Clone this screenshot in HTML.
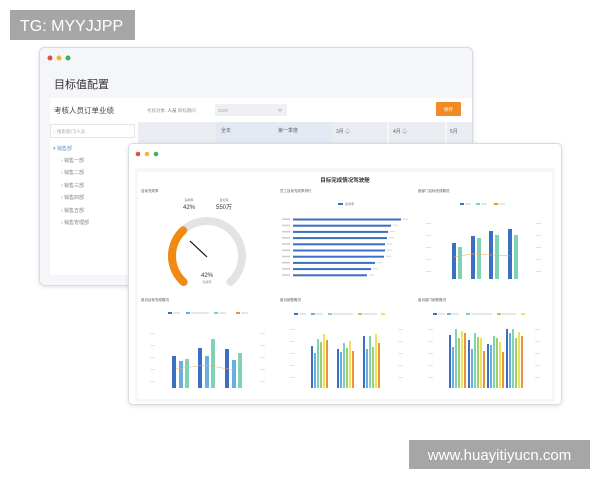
<!DOCTYPE html>
<html><head><meta charset="utf-8"><style>
html,body{margin:0;padding:0;background:#fff;width:600px;height:480px;overflow:hidden}
svg{display:block}
text{font-family:"Liberation Sans","Noto Sans CJK SC",sans-serif}
</style></head><body>
<svg width="600" height="480" viewBox="0 0 600 480" xmlns="http://www.w3.org/2000/svg">
<defs><filter id="sh" x="-10%" y="-10%" width="120%" height="120%"><feDropShadow dx="0" dy="1" stdDeviation="2" flood-color="#000" flood-opacity="0.12"/></filter></defs>
<rect x="10" y="10" width="125" height="30" fill="#a6a6a6"/>
<text x="20" y="31" font-size="16" fill="#fff">TG: MYYJJPP</text>
<!-- back window -->
<rect x="39.5" y="47.5" width="433" height="238" rx="5" fill="#f4f6f9" stroke="#d8dbe0" filter="url(#sh)"/>
<circle cx="50" cy="58" r="2.5" fill="#e0504a"/><circle cx="59" cy="58" r="2.5" fill="#f2b630"/><circle cx="68" cy="58" r="2.5" fill="#3cb55a"/>
<text x="54" y="88" font-size="11" fill="#333">目标值配置</text>
<rect x="50" y="98" width="422" height="24" fill="#fff"/>
<text x="54" y="113" font-size="7.5" fill="#444">考核人员订单业绩</text>
<text x="147" y="112" font-size="4.5" fill="#999">考核对象: <tspan fill="#555">人员</tspan>  目标期间</text>
<rect x="215" y="104" width="72" height="12" fill="#eef0f3"/>
<text x="218" y="112" font-size="4.5" fill="#aaa">2020</text>
<path d="M278 109l2 2 2-2" stroke="#999" fill="none" stroke-width=".7"/>
<rect x="436" y="102" width="25" height="14" rx="1" fill="#f08a24"/>
<text x="444" y="111" font-size="4.5" fill="#fff">保存</text>
<rect x="50" y="122" width="88" height="153" fill="#fff"/>
<rect x="50.5" y="124.5" width="84" height="13" fill="#fff" stroke="#e3e5e8"/>
<text x="53" y="133" font-size="4.5" fill="#aaa">○ 搜索部门/人员</text>
<text x="53" y="150" font-size="5" fill="#6a8fd8">▾  销售部</text>
<g font-size="5" fill="#888">
<text x="61" y="162">›  销售一部</text><text x="61" y="174">›  销售二部</text><text x="61" y="187">›  销售三部</text>
<text x="61" y="199">›  销售四部</text><text x="61" y="212">›  销售五部</text><text x="61" y="224">›  销售管理部</text></g>
<rect x="138" y="122" width="334" height="22" fill="#e9ecf1"/>
<rect x="216" y="122" width="116" height="22" fill="#e3e8f2"/>
<g font-size="5" fill="#666"><text x="221" y="132">全年</text><text x="278" y="132">第一季度</text><text x="336" y="133">3月 ♤</text><text x="393" y="133">4月 ♤</text><text x="450" y="133">5月</text></g>
<line x1="388" y1="122" x2="388" y2="144" stroke="#fff"/><line x1="446" y1="122" x2="446" y2="144" stroke="#fff"/>
<!-- front window -->
<rect x="128.5" y="143.5" width="433" height="261" rx="4" fill="#fff" stroke="#d8dbe0" filter="url(#sh)"/>
<circle cx="138" cy="154" r="2.3" fill="#e0504a"/><circle cx="147" cy="154" r="2.3" fill="#f2b630"/><circle cx="156" cy="154" r="2.3" fill="#3cb55a"/>
<rect x="135" y="168" width="420" height="234" fill="#f5f7fa"/>
<rect x="138" y="172" width="414" height="227" fill="#fff"/>
<text x="345" y="182" font-size="5.5" fill="#333" text-anchor="middle" font-weight="bold">目标完成情况驾驶舱</text>
<g font-size="3.5" fill="#555"><text x="141" y="192">目标完成率</text><text x="280" y="192">员工目标完成率排行</text><text x="418" y="192">各部门目标完成概况</text>
<text x="141" y="301">各月目标完成概况</text><text x="280" y="301">各月销售概况</text><text x="418" y="301">各月部门销售概况</text></g>
<!-- gauge -->
<path d="M183.6 282 A35 35 0 1 1 230.4 282" stroke="#e3e3e5" stroke-width="8" fill="none" stroke-linecap="round"/>
<path d="M183.6 282 A35 35 0 0 1 183.1 230.4" stroke="#f08a12" stroke-width="8" fill="none" stroke-linecap="round"/>
<line x1="190" y1="241" x2="207" y2="257" stroke="#111" stroke-width="1.2"/>
<g text-anchor="middle" fill="#333"><text x="189" y="201" font-size="3" fill="#777">完成率</text><text x="189" y="209" font-size="6">42%</text>
<text x="224" y="201" font-size="3" fill="#777">目标值</text><text x="224" y="209" font-size="6">550万</text>
<text x="207" y="277" font-size="6">42%</text><text x="207" y="283" font-size="3" fill="#888">完成率</text></g>
<!-- hbars -->
<rect x="338" y="203" width="5" height="2" fill="#3a6fc4"/><text x="345" y="205" font-size="3" fill="#777">完成率</text>
<g fill="#3a6fc4">
<rect x="293" y="218.5" width="108" height="2"/><rect x="293" y="224.7" width="98" height="2"/><rect x="293" y="230.9" width="95" height="2"/>
<rect x="293" y="237.1" width="94" height="2"/><rect x="293" y="243.3" width="92" height="2"/><rect x="293" y="249.5" width="92" height="2"/>
<rect x="293" y="255.7" width="91" height="2"/><rect x="293" y="261.9" width="82" height="2"/><rect x="293" y="268.1" width="78" height="2"/><rect x="293" y="274.3" width="74" height="2"/></g>
<g fill="#ccc"><rect x="282" y="218.5" width="8" height="1.5"/><rect x="282" y="224.7" width="8" height="1.5"/><rect x="282" y="230.9" width="8" height="1.5"/><rect x="282" y="237.1" width="8" height="1.5"/><rect x="282" y="243.3" width="8" height="1.5"/><rect x="282" y="249.5" width="8" height="1.5"/><rect x="282" y="255.7" width="8" height="1.5"/><rect x="282" y="261.9" width="8" height="1.5"/><rect x="282" y="268.1" width="8" height="1.5"/><rect x="282" y="274.3" width="8" height="1.5"/></g>
<g fill="#ddd"><rect x="403" y="218.5" width="5" height="1.2"/><rect x="393" y="224.7" width="5" height="1.2"/><rect x="390" y="230.9" width="5" height="1.2"/><rect x="389" y="237.1" width="5" height="1.2"/><rect x="387" y="243.3" width="5" height="1.2"/><rect x="387" y="249.5" width="5" height="1.2"/><rect x="386" y="255.7" width="5" height="1.2"/><rect x="377" y="261.9" width="5" height="1.2"/><rect x="373" y="268.1" width="5" height="1.2"/><rect x="369" y="274.3" width="5" height="1.2"/></g>
<!-- axis ticks (faint) -->
<g fill="#e2e2e2">
<rect x="426" y="223" width="5" height="1"/><rect x="426" y="235" width="5" height="1"/><rect x="426" y="247" width="5" height="1"/><rect x="426" y="259" width="5" height="1"/><rect x="426" y="271" width="5" height="1"/>
<rect x="536" y="223" width="5" height="1"/><rect x="536" y="235" width="5" height="1"/><rect x="536" y="247" width="5" height="1"/><rect x="536" y="259" width="5" height="1"/><rect x="536" y="271" width="5" height="1"/>
<rect x="150" y="333" width="5" height="1"/><rect x="150" y="345" width="5" height="1"/><rect x="150" y="357" width="5" height="1"/><rect x="150" y="369" width="5" height="1"/><rect x="150" y="381" width="5" height="1"/>
<rect x="260" y="333" width="5" height="1"/><rect x="260" y="345" width="5" height="1"/><rect x="260" y="357" width="5" height="1"/><rect x="260" y="369" width="5" height="1"/><rect x="260" y="381" width="5" height="1"/>
<rect x="290" y="329" width="5" height="1"/><rect x="290" y="341" width="5" height="1"/><rect x="290" y="353" width="5" height="1"/><rect x="290" y="365" width="5" height="1"/><rect x="290" y="377" width="5" height="1"/>
<rect x="398" y="329" width="5" height="1"/><rect x="398" y="341" width="5" height="1"/><rect x="398" y="353" width="5" height="1"/><rect x="398" y="365" width="5" height="1"/><rect x="398" y="377" width="5" height="1"/>
<rect x="428" y="329" width="5" height="1"/><rect x="428" y="341" width="5" height="1"/><rect x="428" y="353" width="5" height="1"/><rect x="428" y="365" width="5" height="1"/><rect x="428" y="377" width="5" height="1"/>
<rect x="535" y="329" width="5" height="1"/><rect x="535" y="341" width="5" height="1"/><rect x="535" y="353" width="5" height="1"/><rect x="535" y="365" width="5" height="1"/><rect x="535" y="377" width="5" height="1"/>
</g>
<!-- top right -->
<rect x="460" y="203" width="4" height="2" fill="#3a6fc4"/><rect x="476" y="203" width="4" height="2" fill="#7fd3b0"/><rect x="494" y="203" width="4" height="2" fill="#e8953a"/>
<g fill="#ccc"><rect x="465" y="203.5" width="6" height="1"/><rect x="481" y="203.5" width="6" height="1"/><rect x="499" y="203.5" width="6" height="1"/></g>
<g fill="#3a6fc4"><rect x="452" y="243" width="4" height="36"/><rect x="471" y="236" width="4" height="43"/><rect x="489" y="231" width="4" height="48"/><rect x="508" y="229" width="4" height="50"/></g>
<g fill="#7fd3b0"><rect x="458" y="247" width="4" height="32"/><rect x="477" y="238" width="4" height="41"/><rect x="495" y="235" width="4" height="44"/><rect x="514" y="235" width="4" height="44"/></g>
<polyline points="454,257 472,254 491,255 510,256" stroke="#f0b060" stroke-width=".6" fill="none"/>
<!-- bottom left -->
<rect x="168" y="312" width="4" height="2" fill="#3a6fc4"/><rect x="186" y="312" width="4" height="2" fill="#6aaee0"/><rect x="214" y="312" width="4" height="2" fill="#7fd3b0"/><rect x="236" y="312" width="4" height="2" fill="#e8953a"/>
<g fill="#ccc"><rect x="173" y="312.5" width="7" height="1"/><rect x="191" y="312.5" width="18" height="1"/><rect x="219" y="312.5" width="7" height="1"/><rect x="241" y="312.5" width="7" height="1"/></g>
<g fill="#3a6fc4"><rect x="172" y="356" width="4" height="32"/><rect x="198" y="348" width="4" height="40"/><rect x="225" y="349" width="4" height="39"/></g>
<g fill="#6aaee0"><rect x="179" y="361" width="4" height="27"/><rect x="205" y="356" width="4" height="32"/><rect x="232" y="360" width="4" height="28"/></g>
<g fill="#7fd3b0"><rect x="185" y="359" width="4" height="29"/><rect x="211" y="339" width="4" height="49"/><rect x="238" y="353" width="4" height="35"/></g>
<polyline points="176,369 205,365 234,370" stroke="#f0b060" stroke-width=".6" fill="none"/>
<!-- bottom middle -->
<rect x="294" y="313" width="4" height="2" fill="#3a6fc4"/><rect x="311" y="313" width="4" height="2" fill="#6aaee0"/><rect x="328" y="313" width="4" height="2" fill="#7fd3b0"/><rect x="358" y="313" width="4" height="2" fill="#9fcf6a"/><rect x="381" y="313" width="4" height="2" fill="#f1e05a"/>
<g fill="#ccc"><rect x="299" y="313.5" width="7" height="1"/><rect x="316" y="313.5" width="7" height="1"/><rect x="333" y="313.5" width="20" height="1"/><rect x="363" y="313.5" width="14" height="1"/></g>
<g>
<rect x="311" y="346" width="2" height="42" fill="#3a6fc4"/><rect x="314" y="353" width="2" height="35" fill="#6aaee0"/><rect x="317" y="339" width="2" height="49" fill="#7fd3b0"/><rect x="320" y="342" width="2" height="46" fill="#9fcf6a"/><rect x="323" y="334" width="2" height="54" fill="#f1e05a"/><rect x="326" y="340" width="2" height="48" fill="#e8953a"/>
<rect x="337" y="349" width="2" height="39" fill="#3a6fc4"/><rect x="340" y="352" width="2" height="36" fill="#6aaee0"/><rect x="343" y="343" width="2" height="45" fill="#7fd3b0"/><rect x="346" y="348" width="2" height="40" fill="#9fcf6a"/><rect x="349" y="341" width="2" height="47" fill="#f1e05a"/><rect x="352" y="351" width="2" height="37" fill="#e8953a"/>
<rect x="363" y="336" width="2" height="52" fill="#3a6fc4"/><rect x="366" y="349" width="2" height="39" fill="#6aaee0"/><rect x="369" y="336" width="2" height="52" fill="#7fd3b0"/><rect x="372" y="347" width="2" height="41" fill="#9fcf6a"/><rect x="375" y="334" width="2" height="54" fill="#f1e05a"/><rect x="378" y="343" width="2" height="45" fill="#e8953a"/>
</g>
<!-- bottom right -->
<rect x="433" y="313" width="4" height="2" fill="#3a6fc4"/><rect x="447" y="313" width="4" height="2" fill="#6aaee0"/><rect x="466" y="313" width="4" height="2" fill="#7fd3b0"/><rect x="497" y="313" width="4" height="2" fill="#9fcf6a"/><rect x="521" y="313" width="4" height="2" fill="#f1e05a"/>
<g fill="#ccc"><rect x="438" y="313.5" width="7" height="1"/><rect x="452" y="313.5" width="7" height="1"/><rect x="471" y="313.5" width="21" height="1"/><rect x="502" y="313.5" width="14" height="1"/></g>
<g>
<rect x="449" y="335" width="2" height="53" fill="#3a6fc4"/><rect x="452" y="347" width="2" height="41" fill="#6aaee0"/><rect x="455" y="329" width="2" height="59" fill="#7fd3b0"/><rect x="458" y="338" width="2" height="50" fill="#9fcf6a"/><rect x="461" y="331" width="2" height="57" fill="#f1e05a"/><rect x="464" y="333" width="2" height="55" fill="#e8953a"/>
<rect x="468" y="340" width="2" height="48" fill="#3a6fc4"/><rect x="471" y="349" width="2" height="39" fill="#6aaee0"/><rect x="474" y="333" width="2" height="55" fill="#7fd3b0"/><rect x="477" y="337" width="2" height="51" fill="#9fcf6a"/><rect x="480" y="338" width="2" height="50" fill="#f1e05a"/><rect x="483" y="351" width="2" height="37" fill="#e8953a"/>
<rect x="487" y="344" width="2" height="44" fill="#3a6fc4"/><rect x="490" y="345" width="2" height="43" fill="#6aaee0"/><rect x="493" y="336" width="2" height="52" fill="#7fd3b0"/><rect x="496" y="338" width="2" height="50" fill="#9fcf6a"/><rect x="499" y="342" width="2" height="46" fill="#f1e05a"/><rect x="502" y="352" width="2" height="36" fill="#e8953a"/>
<rect x="506" y="329" width="2" height="59" fill="#3a6fc4"/><rect x="509" y="333" width="2" height="55" fill="#6aaee0"/><rect x="512" y="329" width="2" height="59" fill="#7fd3b0"/><rect x="515" y="338" width="2" height="50" fill="#9fcf6a"/><rect x="518" y="332" width="2" height="56" fill="#f1e05a"/><rect x="521" y="336" width="2" height="52" fill="#e8953a"/>
</g>
<!-- watermark -->
<rect x="409" y="440" width="181" height="29" fill="#a6a6a6"/>
<text x="499.5" y="460" font-size="15" fill="#fff" text-anchor="middle">www.huayitiyucn.com</text>
</svg>
</body></html>
